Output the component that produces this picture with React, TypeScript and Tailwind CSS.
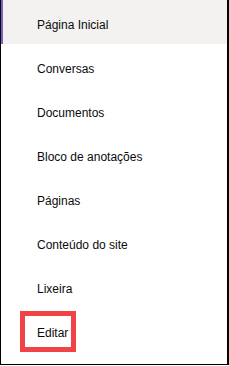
import React from "react";

const items = [
  "Página Inicial",
  "Conversas",
  "Documentos",
  "Bloco de anotações",
  "Páginas",
  "Conteúdo do site",
  "Lixeira",
  "Editar",
];

export default function App() {
  return (
    <div
      className="relative w-[229px] h-[366px] bg-white overflow-hidden"
      style={{ fontFamily: '"Liberation Sans", Arial, sans-serif' }}
    >
      <div className="absolute inset-0 pointer-events-none border-l border-r-2 border-b border-black mb-[1px]" />
      <nav className="flex flex-col pl-[1px] pr-[2px]">
        {items.map((label, i) => (
          <div
            key={label}
            className={
              "relative h-[44px] pt-[17px] pl-[36px] text-[12px] leading-[16px] text-[#0b0b0b] " +
              (i === 0 ? "bg-[#f3f2f1]" : "")
            }
          >
            {i === 0 && (
              <span className="absolute left-0 top-0 bottom-0 w-[2px] bg-[#7f5fc1]" />
            )}
            {label}
          </div>
        ))}
      </nav>
      <div className="absolute left-[20px] top-[311px] w-[56px] h-[41px] border-[5px] border-[#f04348] pointer-events-none" />
    </div>
  );
}
